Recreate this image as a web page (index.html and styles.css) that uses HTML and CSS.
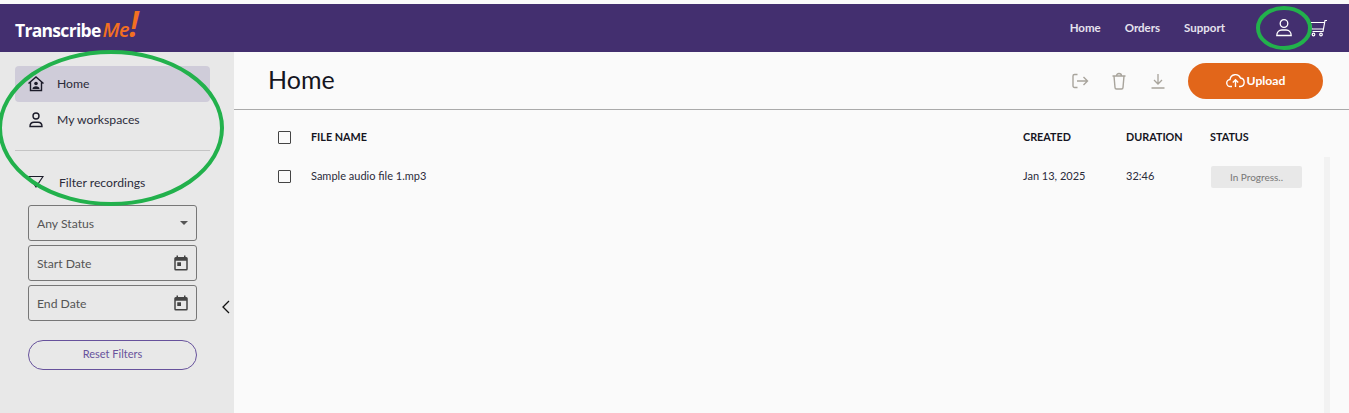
FILE: index.html
```html
<!doctype html>
<html lang="en">
<head>
	<meta charset="utf-8">
	<meta name="viewport" content="width=device-width, initial-scale=1.0">
	<title>TranscribeMe</title>
	<link rel="stylesheet" href="styles.css">
</head>
<body>
	<div id="pagewrap">
		<div id="header">
			<div class="logo">Transcribe<span class="logo_me">Me</span><span class="logo_bang">!</span></div>
			<div class="topnav">
				<a>Home</a>
				<a>Orders</a>
				<a>Support</a>
			</div>
			<div class="topicons">
				<svg width="20" height="20" viewBox="0 0 20 20" fill="none" stroke="#fff" stroke-width="1.3"><circle cx="10" cy="5.5" r="3.8"/><path d="M2.8 17.5c0-3.6 2.4-5.5 5-5.5h4.400c2.600 0 5 1.900 5 5.500z"/></svg>
				<svg width="20" height="20" viewBox="0 0 20 20" fill="none" stroke="#fff" stroke-width="1.200"><path d="M19 2.500h-2L15 13.500H4.500M16.600 4.500H2l1.800 6.500h11.700"/><circle cx="5.500" cy="16.500" r="1.300"/><circle cx="13" cy="16.500" r="1.300"/></svg>
			</div>
		</div>

		<div id="body">
			<div id="sidebar">
				<div class="navitem navitem_active">
					<svg width="18" height="18" viewBox="0 0 18 18" fill="none" stroke="#1c1c2a" stroke-width="1.400"><path d="M1.500 8.500L9 2l7.500 6.500M3.500 7v8.500h11V7"/><circle cx="9" cy="8.500" r="1.800" fill="#1c1c2a" stroke="none"/><path d="M5.500 14c0-2 1.500-2.800 3.500-2.800s3.500.8 3.500 2.800z" fill="#1c1c2a" stroke="none"/></svg>
					<span>Home</span>
				</div>
				<div class="navitem">
					<svg width="18" height="18" viewBox="0 0 18 18" fill="none" stroke="#1c1c2a" stroke-width="1.400"><circle cx="9" cy="5" r="3"/><path d="M3 15.500c0-3 2-4.300 4-4.300h4c2 0 4 1.300 4 4.300z"/></svg>
					<span>My workspaces</span>
				</div>
				<hr class="divider">
				<div class="filter_title">
					<svg width="16" height="14" viewBox="0 0 16 14" fill="none" stroke="#1c1c2a" stroke-width="1.200"><path d="M1 1.500h14L8 12z"/></svg>
					<span>Filter recordings</span>
				</div>
				<div class="field"><span class="field_label">Any Status</span><span class="caret"></span></div>
				<div class="field">
					<span class="field_label">Start Date</span>
					<svg width="18" height="18" viewBox="0 0 24 24" fill="#444"><path d="M19 4h-1V2h-2v2H8V2H6v2H5a2 2 0 0 0-2 2v14a2 2 0 0 0 2 2h14a2 2 0 0 0 2-2V6a2 2 0 0 0-2-2zm0 16H5V9h14v11zM7 11h5v5H7z"/></svg>
				</div>
				<div class="field">
					<span class="field_label">End Date</span>
					<svg width="18" height="18" viewBox="0 0 24 24" fill="#444"><path d="M19 4h-1V2h-2v2H8V2H6v2H5a2 2 0 0 0-2 2v14a2 2 0 0 0 2 2h14a2 2 0 0 0 2-2V6a2 2 0 0 0-2-2zm0 16H5V9h14v11zM7 11h5v5H7z"/></svg>
				</div>
				<div class="reset">Reset Filters</div>
				<svg class="collapse" width="10" height="14" viewBox="0 0 10 14" fill="none" stroke="#111" stroke-width="1.300"><path d="M8 1L2 7l6 6"/></svg>
			</div>

			<div id="content">
				<div class="content_head">
					<h1>Home</h1>
					<div class="actions">
						<svg width="18" height="18" viewBox="0 0 18 18" fill="none" stroke="#a8a49c" stroke-width="1.400"><path d="M6.500 2.500H3.500a1.500 1.500 0 0 0-1.500 1.500v10a1.500 1.500 0 0 0 1.500 1.500h3M6 9h10.500M12.500 5L16.500 9l-4 4"/></svg>
						<svg width="18" height="18" viewBox="0 0 18 18" fill="none" stroke="#a8a49c" stroke-width="1.400"><path d="M2.500 4h13M6.500 4c0-1.500 1-2.500 2.500-2.500s2.500 1 2.500 2.500M4 4l1 11.500c0 1 .5 1.500 1.500 1.500h5c1 0 1.500-.5 1.500-1.500L14 4"/></svg>
						<svg width="18" height="18" viewBox="0 0 18 18" fill="none" stroke="#a8a49c" stroke-width="1.300"><path d="M9 2v10M5 8l4 4 4-4M2.500 16h13"/></svg>
						<div class="upload">
							<svg width="19" height="15" viewBox="0 0 19 15" fill="none" stroke="#fff" stroke-width="1.400"><path d="M6 13.500H4.500a3.500 3.500 0 0 1-.5-7 5.500 5.500 0 0 1 10.500-1.500 4.300 4.300 0 0 1 0 8.500H13M9.500 14V7M6.800 9.500l2.700-2.700 2.700 2.700"/></svg>
							<span>Upload</span>
						</div>
					</div>
				</div>
				<div class="table_row table_header">
					<span class="check"></span>
					<span class="col_name">FILE NAME</span>
					<span class="col_created">CREATED</span>
					<span class="col_duration">DURATION</span>
					<span class="col_status">STATUS</span>
				</div>
				<div class="table_row table_item">
					<span class="check"></span>
					<span class="col_name">Sample audio file 1.mp3</span>
					<span class="col_created">Jan 13, 2025</span>
					<span class="col_duration">32:46</span>
					<span class="col_status"><span class="pill">In Progress..</span></span>
				</div>
				<div class="scrolltrack"></div>
			</div>
		</div>

		<!-- green marks drawn over the screenshot -->
		<svg class="mark mark_side" width="232" height="160" viewBox="0 0 232 160" fill="none" stroke="#22b14c" stroke-width="4"><ellipse cx="117" cy="78" rx="111" ry="76"/></svg>
		<svg class="mark mark_user" width="58" height="46" viewBox="0 0 58 46" fill="none" stroke="#22b14c" stroke-width="4"><ellipse cx="29" cy="23" rx="26" ry="20"/></svg>
	</div>
</body>
</html>
```

FILE: styles.css
```css
html, body {
	margin: 0;
	padding: 0;
}
body {
	font: 12.2px/16px Lato, Arial, sans-serif;
	color: #2b2b3a;
	background: #fafafa;
}
#pagewrap {
	position: relative;
	width: 1349px;
	height: 413px;
	overflow: hidden;
	padding-top: 4px;
	box-sizing: border-box;
}

/* Header */
#header {
	display: flex;
	align-items: center;
	height: 48px;
	background: #432f6f;
	padding-left: 15px;
	color: #fff;
}
.logo {
	font: 700 17.500px/24px "Open Sans", Arial, sans-serif;
	letter-spacing: -0.7px;
	margin-top: 4px;
}
.logo_me {
	color: #f37021;
	font-style: italic;
	font-weight: 600;
	font-size: 20px;
	margin-left: 2px;
}
.logo_bang {
	color: #f37021;
	font-style: italic;
	font-weight: 600;
	font-size: 36px;
	line-height: 0;
}
.topnav {
	display: flex;
	gap: 24px;
	margin-left: auto;
	font-weight: 700;
	font-size: 11.500px;
	color: #e6e3ee;
}
.topicons {
	display: flex;
	gap: 14px;
	margin-left: 49px;
	margin-right: 21px;
}

/* Sidebar */
#body {
	display: flex;
	height: 361px;
}
#sidebar {
	position: relative;
	width: 234px;
	box-sizing: border-box;
	background: #e8e8e8;
	padding: 14px 24px 0 15px;
}
.navitem {
	display: flex;
	align-items: center;
	gap: 12px;
	height: 36px;
	padding-left: 12px;
	border-radius: 4px;
}
.navitem_active {
	background: #cfccd9;
}
.divider {
	border: 0;
	border-top: 1px solid #c4c4c4;
	margin: 12px 0 0;
}
.filter_title {
	display: flex;
	align-items: center;
	gap: 15px;
	margin: 23px 0 15px 13px;
	height: 16px;
}
.filter_title span {
	margin-top: 2px;
}
.field {
	display: flex;
	align-items: center;
	justify-content: space-between;
	box-sizing: border-box;
	width: 169px;
	height: 36px;
	margin: 0 0 4px 13px;
	padding: 0 6px 0 8px;
	border: 1px solid #777;
	border-radius: 3px;
	color: #555;
}
.field_label {
	margin-top: 2px;
}
.caret {
	width: 0;
	height: 0;
	margin-right: 2px;
	border-left: 4px solid transparent;
	border-right: 4px solid transparent;
	border-top: 4px solid #555;
}
.reset {
	width: 169px;
	height: 30px;
	box-sizing: border-box;
	margin: 19px 0 0 13px;
	border: 1px solid #67529c;
	border-radius: 15px;
	text-align: center;
	line-height: 26px;
	font-size: 11px;
	color: #67529c;
}
.collapse {
	position: absolute;
	left: 221px;
	top: 248px;
}

/* Main */
#content {
	position: relative;
	flex: 1;
}
.content_head {
	display: flex;
	align-items: center;
	justify-content: space-between;
	height: 58px;
	box-sizing: border-box;
	padding: 0 26px 0 34px;
	border-bottom: 1px solid #aaa;
}
h1 {
	margin: 0 0 4px;
	font-size: 25px;
	font-weight: normal;
	color: #15151f;
}
.actions {
	display: flex;
	align-items: center;
	gap: 21px;
}
.upload {
	display: flex;
	align-items: center;
	justify-content: center;
	gap: 2px;
	width: 135px;
	height: 36px;
	border-radius: 18px;
	background: #e2661a;
	color: #fff;
	font-weight: 700;
}
.table_row {
	display: flex;
	align-items: center;
	padding-left: 44px;
}
.table_header {
	height: 16px;
	margin-top: 19px;
	font-size: 10.800px;
	font-weight: 700;
	color: #15151f;
}
.table_item {
	height: 22px;
	margin-top: 21px;
	font-size: 11px;
}
.table_item .col_name,
.table_item .col_created,
.table_item .col_duration {
	margin-bottom: 2px;
}
.table_item .check {
	margin-bottom: 1px;
}
.check {
	width: 11px;
	height: 11px;
	border: 1px solid #444;
	border-radius: 1px;
	margin-right: 20px;
}
.col_name { width: 712px; }
.col_created { width: 103px; }
.col_duration { width: 84px; }
.pill {
	display: block;
	width: 91px;
	height: 22px;
	margin-left: 1px;
	border-radius: 2px;
	background: #e8e8e8;
	text-align: center;
	line-height: 22px;
	font-size: 10px;
	color: #777;
}
.scrolltrack {
	position: absolute;
	left: 1090px;
	top: 105px;
	bottom: 0;
	width: 6px;
	background: #f2f2f2;
}

/* Annotations */
.mark {
	position: absolute;
}
.mark_side {
	left: -6px;
	top: 50px;
}
.mark_user {
	left: 1255px;
	top: 5px;
}
```
